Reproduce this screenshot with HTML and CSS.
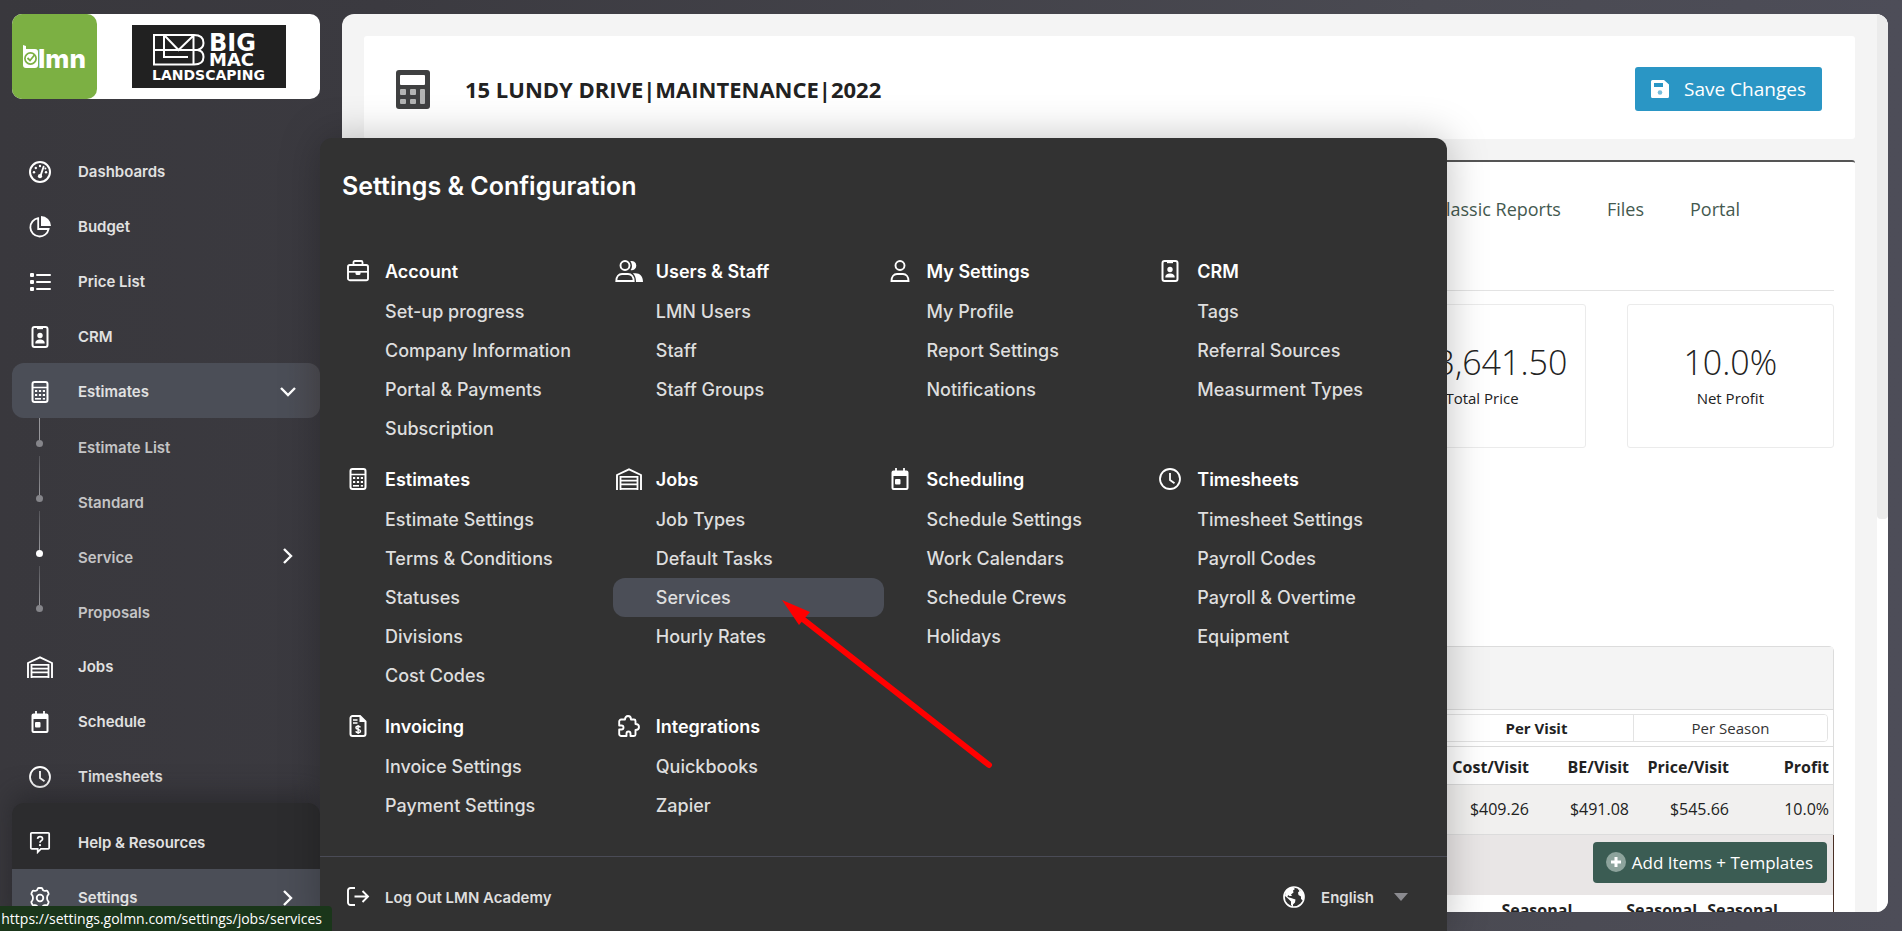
FILE: index.html
```
<!DOCTYPE html>
<html lang="en">
<head>
    <meta charset="UTF-8">
    <meta name="viewport" content="width=device-width, initial-scale=1.0">
    <title>LMN - Estimates</title>
    <link rel="stylesheet" href="styles.css">
</head>
<body>
    <!-- icon set -->
    <svg class="icon-defs" xmlns="http://www.w3.org/2000/svg">
        <symbol id="i-dash" viewBox="0 0 22 22">
            <circle cx="11" cy="11" r="10" fill="none" stroke="currentColor" stroke-width="2"/>
            <path d="M14.6 5.6l-3 9" stroke="currentColor" stroke-width="1.8" stroke-linecap="round"/>
            <circle cx="11" cy="15.2" r="2.1" fill="currentColor"/>
            <g fill="currentColor"><circle cx="5" cy="11.3" r="1.2"/><circle cx="6.8" cy="7" r="1.2"/><circle cx="11" cy="5" r="1.2"/><circle cx="17" cy="11.3" r="1.2"/><circle cx="16.4" cy="7.6" r="1"/></g>
        </symbol>
        <symbol id="i-pie" viewBox="0 0 22 22">
            <path d="M12 0a10 10 0 0 1 10 10H12z" fill="currentColor"/>
            <path d="M9.2 2.2A9.2 9.2 0 1 0 19.6 13H9.2z" fill="none" stroke="currentColor" stroke-width="1.8"/>
        </symbol>
        <symbol id="i-list" viewBox="0 0 22 22">
            <g fill="currentColor"><rect x="1" y="2" width="4" height="4" rx="1"/><rect x="1" y="9" width="4" height="4" rx="1"/><rect x="1" y="16" width="4" height="4" rx="1"/><rect x="7" y="3" width="15" height="2" rx="1"/><rect x="7" y="10" width="15" height="2" rx="1"/><rect x="7" y="17" width="15" height="2" rx="1"/></g>
        </symbol>
        <symbol id="i-crm" viewBox="0 0 22 22">
            <rect x="3.5" y="1" width="15" height="20" rx="2" fill="none" stroke="currentColor" stroke-width="2"/>
            <path d="M8 1h6v2.2H8z" fill="currentColor"/>
            <circle cx="11" cy="9.5" r="2.7" fill="currentColor"/>
            <path d="M6.3 17.5c0-3 2-4 4.7-4s4.7 1 4.7 4z" fill="currentColor"/>
        </symbol>
        <symbol id="i-calc" viewBox="0 0 22 22">
            <rect x="3.5" y="1" width="15" height="20" rx="2" fill="none" stroke="currentColor" stroke-width="2"/>
            <path d="M4 6.5h14" stroke="currentColor" stroke-width="1.5"/>
            <g fill="currentColor"><rect x="6" y="9" width="2.2" height="2"/><rect x="9.9" y="9" width="2.2" height="2"/><rect x="13.8" y="9" width="2.2" height="2"/><rect x="6" y="13" width="2.2" height="2"/><rect x="9.9" y="13" width="2.2" height="2"/><rect x="13.8" y="13" width="2.2" height="2"/><rect x="6" y="17" width="6" height="1.6"/><rect x="13.8" y="17" width="2.2" height="1.6"/></g>
        </symbol>
        <symbol id="i-jobs" viewBox="0 0 28 22">
            <path d="M2 22V7l12-5.6L26 7v15" fill="none" stroke="currentColor" stroke-width="1.9"/>
            <path d="M5.5 22V8.9h17V22M6 12.6h16M6 16.4h16M5 20.8h18" fill="none" stroke="currentColor" stroke-width="1.8"/>
        </symbol>
        <symbol id="i-cal" viewBox="0 0 22 22">
            <path d="M4.5 2.5h13a2 2 0 0 1 2 2V20a2 2 0 0 1-2 2h-13a2 2 0 0 1-2-2V4.5a2 2 0 0 1 2-2zM4.5 8v12h13V8z" fill="currentColor" fill-rule="evenodd"/>
            <path d="M7 0v4M15 0v4" stroke="currentColor" stroke-width="1.8"/>
            <rect x="6" y="11" width="5.5" height="5.5" rx="1" fill="currentColor"/>
        </symbol>
        <symbol id="i-clock" viewBox="0 0 22 22">
            <circle cx="11" cy="11" r="10" fill="none" stroke="currentColor" stroke-width="1.8"/>
            <path d="M11 5v7l4.5 3.2" fill="none" stroke="currentColor" stroke-width="1.8"/>
        </symbol>
        <symbol id="i-help" viewBox="0 0 22 24">
            <path d="M2 1h18a1 1 0 0 1 1 1v15.5a1 1 0 0 1-1 1h-8l-3.5 3.5v-3.5H2a1 1 0 0 1-1-1V2a1 1 0 0 1 1-1z" fill="none" stroke="currentColor" stroke-width="1.9"/>
            <path d="M8.3 7.5C8.5 5.7 9.6 5 11 5s2.8.9 2.8 2.5c0 2-2.8 2-2.8 4.3" fill="none" stroke="currentColor" stroke-width="1.8"/>
            <circle cx="11" cy="14.4" r="1.2" fill="currentColor"/>
        </symbol>
        <symbol id="i-gear" viewBox="0 0 22 22">
            <circle cx="11" cy="11" r="3.3" fill="none" stroke="currentColor" stroke-width="1.8"/>
            <path d="M9.6 1h2.8a1 1 0 0 1 1 .8c.3 1.6 1.6 2.5 3.3 2 .9-.3 1.4-.2 1.8.5l1 1.8c.4.7.2 1.2-.4 1.7-1.4 1.3-1.4 5.1 0 6.4.6.5.8 1 .4 1.7l-1 1.8c-.4.7-.9.8-1.8.5-1.7-.5-3 .4-3.3 2a1 1 0 0 1-1 .8H9.6a1 1 0 0 1-1-.8c-.3-1.6-1.6-2.5-3.3-2-.9.3-1.4.2-1.8-.5l-1-1.8c-.4-.7-.2-1.2.4-1.7 1.4-1.3 1.4-5.1 0-6.4-.6-.5-.8-1-.4-1.7l1-1.8c.4-.7.9-.8 1.8-.5 1.7.5 3-.4 3.300-2a1 1 0 0 1 1-.8z" fill="none" stroke="currentColor" stroke-width="1.8" stroke-linejoin="round"/>
        </symbol>
        <symbol id="i-case" viewBox="0 0 22 22">
            <path d="M6.5 5V2.3A1.3 1.3 0 0 1 7.8 1h6.4a1.3 1.3 0 0 1 1.3 1.3V5" fill="none" stroke="currentColor" stroke-width="1.8"/>
            <rect x="1" y="5" width="20" height="15.2" rx="1.8" fill="none" stroke="currentColor" stroke-width="1.9"/>
            <path d="M1 11.8h20" stroke="currentColor" stroke-width="1.7"/>
            <path d="M8.5 12h5v1.5a1.5 1.5 0 0 1-1.5 1.5h-2a1.5 1.5 0 0 1-1.5-1.5z" fill="currentColor"/>
        </symbol>
        <symbol id="i-users" viewBox="0 0 28 22">
            <circle cx="10" cy="5.5" r="4.5" fill="none" stroke="currentColor" stroke-width="1.9"/>
            <path d="M1.3 21c0-4.5 2.5-7 5.7-7h6c3.2 0 5.7 2.5 5.7 7z" fill="none" stroke="currentColor" stroke-width="1.9"/>
            <path d="M15.2 1.3a4.6 4.6 0 1 1 .3 8.8c2-2.6 2-6-.3-8.800zM17.8 13.2h2.7c4.5 0 7.5 3.3 7.5 8.8h-7c.1-3.9-1-7-3.2-8.8z" fill="currentColor"/>
        </symbol>
        <symbol id="i-user" viewBox="0 0 22 22">
            <circle cx="11" cy="5.5" r="4.5" fill="none" stroke="currentColor" stroke-width="1.9"/>
            <path d="M2.5 21c0-4.5 2.5-7 5.5-7h6c3 0 5.5 2.5 5.5 7z" fill="none" stroke="currentColor" stroke-width="1.9"/>
        </symbol>
        <symbol id="i-invoice" viewBox="0 0 22 22">
            <path d="M5.5 1H13l5.5 5.5V19a2 2 0 0 1-2 2h-11a2 2 0 0 1-2-2V3a2 2 0 0 1 2-2z" fill="none" stroke="currentColor" stroke-width="2"/>
            <path d="M12.5 1v6h6z" fill="currentColor"/>
            <path d="M6 5h4.5M6 8h4.5" stroke="currentColor" stroke-width="1.3"/>
            <path d="M13.4 12.3c-.5-.8-1.3-1-2.3-1-1.3 0-2.2.6-2.2 1.5 0 2.2 4.6 1 4.6 3.2 0 1-.9 1.6-2.3 1.6-1.2 0-2.1-.4-2.5-1.2M11.1 10v9" fill="none" stroke="currentColor" stroke-width="1.4"/>
        </symbol>
        <symbol id="i-puzzle" viewBox="0 0 22 22">
            <path d="M1.2 6.5a2 2 0 0 1 2-2H7c0-2 1-3.5 3-3.5s3 1.5 3 3.5h3a1.5 1.5 0 0 1 1.5 1.5v3c2 0 3.5 1 3.5 3s-1.500 3-3.500 3v4.500a1.500 1.500 0 0 1-1.500 1.500h-3.500v-2.500c0-1.200-.8-2-2-2s-2 .8-2 2V21H3.200a2 2 0 0 1-2-2v-4.500H3.500c1.200 0 2-.8 2-2s-.8-2-2-2H1.200z" fill="none" stroke="currentColor" stroke-width="1.9" stroke-linejoin="round"/>
        </symbol>
        <symbol id="i-logout" viewBox="0 0 22 22">
            <path d="M8 2H3.500A2.500 2.500 0 0 0 1 4.500v12A2.500 2.500 0 0 0 3.500 19H8M7.500 10.500H21M15.500 5l5.500 5.500-5.500 5.500" fill="none" stroke="currentColor" stroke-width="1.9"/>
        </symbol>
        <symbol id="i-globe" viewBox="0 0 22 22">
            <circle cx="11" cy="11" r="10" fill="none" stroke="currentColor" stroke-width="1.7"/>
            <path d="M3 4.500C5 2 8 1 10.500 1.500L12 3l-2 1.500.5 2L8 8.500l1 1.500H6.500L5 9l-.5 2L8 12l4.500 1.500-.5 3-2 2v2.500L8 19v-3.500L5.500 13 2 10zM14 2l5 3.500 2 4.500-1 4.500-2-1.500v-2.500L15.500 9 15 6.500l1.500-1.500z" fill="currentColor"/>
        </symbol>
        <symbol id="i-right" viewBox="0 0 12 18">
            <path d="M2 2l7 7-7 7" fill="none" stroke="currentColor" stroke-width="2.4"/>
        </symbol>
        <symbol id="i-down" viewBox="0 0 18 12">
            <path d="M2 2l7 7 7-7" fill="none" stroke="currentColor" stroke-width="2.4"/>
        </symbol>
    </svg>

    <aside class="sidebar">
        <div class="brand">
            <svg class="brand-lmn" viewBox="0 0 85 85">
                <rect width="85" height="85" rx="10" fill="#7cb043"/>
                <path d="M11 31l3 1v3h9a3 3 0 0 1 3 3v13a3 3 0 0 1-3 3h-9a3 3 0 0 1-3-3z" fill="#fff"/>
                <circle cx="18.5" cy="44.5" r="5.6" fill="none" stroke="#7cb043" stroke-width="1.7"/>
                <path d="M15.5 44l2.5 2.5 4.5-5.5" fill="none" stroke="#7cb043" stroke-width="1.8"/>
                <text class="lmn-text" x="26" y="54">lmn</text>
            </svg>
            <svg class="brand-company" viewBox="0 0 154 63">
                <rect width="154" height="63" fill="#212121"/>
                <g fill="none" stroke="#fff" stroke-width="2">
                    <path d="M22 10v29.5h40c6 0 9.5-2.5 9.5-7.5 0-4-2.5-6.5-6-7 3.5-1 6-3.5 6-7 0-5-3.5-8-9.5-8z"/>
                    <path d="M22 25h44M32 10v22h24M33 11l13.5 14L61 11M61.5 10v29.5"/>
                </g>
                <text class="company-big" x="77" y="26">BIG</text>
                <text class="company-mac" x="77" y="41">MAC</text>
                <text class="company-land" x="20" y="55">LANDSCAPING</text>
            </svg>
        </div>

        <nav class="nav">
            <a class="nav-item" href="#"><svg class="icon"><use href="#i-dash"/></svg>Dashboards</a>
            <a class="nav-item" href="#"><svg class="icon"><use href="#i-pie"/></svg>Budget</a>
            <a class="nav-item" href="#"><svg class="icon"><use href="#i-list"/></svg>Price List</a>
            <a class="nav-item" href="#"><svg class="icon"><use href="#i-crm"/></svg>CRM</a>
            <a class="nav-item active" href="#"><svg class="icon"><use href="#i-calc"/></svg>Estimates<svg class="chevron-down"><use href="#i-down"/></svg></a>
            <a class="nav-item sub first" href="#"><span class="dot"></span>Estimate List</a>
            <a class="nav-item sub" href="#"><span class="dot"></span>Standard</a>
            <a class="nav-item sub current" href="#"><span class="dot"></span>Service<svg class="chevron"><use href="#i-right"/></svg></a>
            <a class="nav-item sub" href="#"><span class="dot"></span>Proposals</a>
            <a class="nav-item" href="#"><svg class="icon"><use href="#i-jobs"/></svg>Jobs</a>
            <a class="nav-item" href="#"><svg class="icon"><use href="#i-cal"/></svg>Schedule</a>
            <a class="nav-item" href="#"><svg class="icon"><use href="#i-clock"/></svg>Timesheets</a>
        </nav>

        <div class="nav-bottom">
            <a class="nav-item" href="#"><svg class="icon"><use href="#i-help"/></svg>Help &amp; Resources</a>
            <a class="nav-item settings" href="#"><svg class="icon"><use href="#i-gear"/></svg>Settings<svg class="chevron"><use href="#i-right"/></svg></a>
        </div>
    </aside>

    <main class="content">
        <div class="page">
            <header class="page-header">
                <svg class="calc-icon" viewBox="0 0 34 39">
                    <rect width="34" height="39" rx="3" fill="#3f4041"/>
                    <rect x="4" y="5" width="25" height="10" rx="1" fill="#fff"/>
                    <g fill="#b3b4b4"><rect x="4" y="19" width="6" height="6" rx="1"/><rect x="14" y="19" width="6" height="6" rx="1"/><rect x="4" y="29" width="6" height="5" rx="1"/><rect x="14" y="29" width="6" height="5" rx="1"/><rect x="24" y="19" width="5" height="15" rx="1"/></g>
                </svg>
                <h1>15 LUNDY DRIVE|MAINTENANCE|2022</h1>
                <button type="button" class="btn-save">
                    <svg class="save-icon" viewBox="0 0 18 18">
                        <path d="M1.5 0H13l5 4.5V16.5a1.5 1.5 0 0 1-1.5 1.5h-15A1.5 1.5 0 0 1 0 16.5v-15A1.5 1.5 0 0 1 1.5 0zM3 3v4h9V3z" fill="#fff" fill-rule="evenodd"/>
                        <circle cx="9" cy="12.5" r="2.3" fill="#77bddc"/>
                    </svg>
                    Save Changes
                </button>
            </header>

            <section class="estimate">
                <nav class="tabs">
                    <a href="#">Classic Reports</a>
                    <a href="#">Files</a>
                    <a href="#">Portal</a>
                </nav>

                <div class="stats">
                    <div class="stat total"><span class="stat-value">$13,641.50</span><span class="stat-label">Total Price</span></div>
                    <div class="stat"><span class="stat-value">10.0%</span><span class="stat-label">Net Profit</span></div>
                </div>

                <div class="services">
                    <div class="services-head"></div>
                    <div class="toggle-row">
                        <div class="toggle">
                            <button type="button" class="selected">Per Visit</button>
                            <button type="button">Per Season</button>
                        </div>
                    </div>
                    <table class="visits">
                        <thead>
                            <tr><th>Cost/Visit</th><th>BE/Visit</th><th>Price/Visit</th><th>Profit</th></tr>
                        </thead>
                        <tbody>
                            <tr><td>$409.26</td><td>$491.08</td><td>$545.66</td><td>10.0%</td></tr>
                        </tbody>
                    </table>
                    <div class="items">
                        <div class="items-bar">
                            <button type="button" class="btn-add">
                                <svg class="plus-icon" viewBox="0 0 20 20">
                                    <circle cx="10" cy="10" r="10" fill="#8da39c"/>
                                    <path d="M10 5v10M5 10h10" stroke="#fff" stroke-width="3"/>
                                </svg>
                                Add Items + Templates
                            </button>
                        </div>
                        <div class="seasonal">
                            <span>Seasonal</span>
                            <span>Seasonal</span>
                            <span>Seasonal</span>
                        </div>
                    </div>
                </div>
            </section>
        </div>
        <div class="scrollbar"><div class="thumb"></div></div>
    </main>

    <!-- settings flyout -->
    <div class="flyout">
        <h2>Settings &amp; Configuration</h2>
        <div class="menu-grid">
            <section class="group">
                <h3><svg class="icon"><use href="#i-case"/></svg>Account</h3>
                <a href="#">Set-up progress</a>
                <a href="#">Company Information</a>
                <a href="#">Portal &amp; Payments</a>
                <a href="#">Subscription</a>
            </section>
            <section class="group">
                <h3><svg class="icon"><use href="#i-users"/></svg>Users &amp; Staff</h3>
                <a href="#">LMN Users</a>
                <a href="#">Staff</a>
                <a href="#">Staff Groups</a>
            </section>
            <section class="group">
                <h3><svg class="icon"><use href="#i-user"/></svg>My Settings</h3>
                <a href="#">My Profile</a>
                <a href="#">Report Settings</a>
                <a href="#">Notifications</a>
            </section>
            <section class="group">
                <h3><svg class="icon"><use href="#i-crm"/></svg>CRM</h3>
                <a href="#">Tags</a>
                <a href="#">Referral Sources</a>
                <a href="#">Measurment Types</a>
            </section>
            <section class="group">
                <h3><svg class="icon"><use href="#i-calc"/></svg>Estimates</h3>
                <a href="#">Estimate Settings</a>
                <a href="#">Terms &amp; Conditions</a>
                <a href="#">Statuses</a>
                <a href="#">Divisions</a>
                <a href="#">Cost Codes</a>
            </section>
            <section class="group">
                <h3><svg class="icon"><use href="#i-jobs"/></svg>Jobs</h3>
                <a href="#">Job Types</a>
                <a href="#">Default Tasks</a>
                <a href="#" class="hovered">Services</a>
                <a href="#">Hourly Rates</a>
            </section>
            <section class="group">
                <h3><svg class="icon"><use href="#i-cal"/></svg>Scheduling</h3>
                <a href="#">Schedule Settings</a>
                <a href="#">Work Calendars</a>
                <a href="#">Schedule Crews</a>
                <a href="#">Holidays</a>
            </section>
            <section class="group">
                <h3><svg class="icon"><use href="#i-clock"/></svg>Timesheets</h3>
                <a href="#">Timesheet Settings</a>
                <a href="#">Payroll Codes</a>
                <a href="#">Payroll &amp; Overtime</a>
                <a href="#">Equipment</a>
            </section>
            <section class="group">
                <h3><svg class="icon"><use href="#i-invoice"/></svg>Invoicing</h3>
                <a href="#">Invoice Settings</a>
                <a href="#">Payment Settings</a>
            </section>
            <section class="group">
                <h3><svg class="icon"><use href="#i-puzzle"/></svg>Integrations</h3>
                <a href="#">Quickbooks</a>
                <a href="#">Zapier</a>
            </section>
        </div>
        <footer class="flyout-footer">
            <a href="#"><svg class="icon"><use href="#i-logout"/></svg>Log Out LMN Academy</a>
            <button type="button" class="language"><svg class="icon"><use href="#i-globe"/></svg>English<span class="caret"></span></button>
        </footer>
    </div>

    <svg class="arrow" viewBox="0 0 214 172">
        <path d="M207 165L22 20" stroke="#f00" stroke-width="6" stroke-linecap="round"/>
        <path d="M0 0l28 12-11 13z" fill="#f00"/>
    </svg>

    <div class="status-bar"><span>https://settings.golmn.com/settings/jobs/services</span></div>
</body>
</html>
```

FILE: styles.css
```
* {
    box-sizing: border-box;
}
body {
    margin: 0;
    height: 100vh;
    display: flex;
    gap: 22px;
    padding: 14px 14px 0 12px;
    overflow: hidden;
    position: relative;
    background: linear-gradient(to right, #39383d 0%, #3b3a40 20%, #4a4a52 75%, #4d4d58 100%);
    font-family: "Open Sans", "Noto Sans", sans-serif;
    color: #222;
}
a {
    color: inherit;
    text-decoration: none;
}
button {
    font-family: inherit;
    cursor: pointer;
}
.icon-defs {
    position: absolute;
    width: 0;
    height: 0;
}
.icon {
    width: 28px;
    height: 22px;
    flex-shrink: 0;
    color: #fff;
}

/* sidebar */
.sidebar {
    width: 308px;
    flex-shrink: 0;
    display: flex;
    flex-direction: column;
    font-family: Inter, sans-serif;
}
.brand {
    height: 85px;
    flex-shrink: 0;
    display: flex;
    align-items: center;
    gap: 35px;
    background: #fff;
    border-radius: 10px;
    margin-bottom: 44px;
}
.brand-lmn {
    width: 85px;
    height: 85px;
}
.brand-company {
    width: 154px;
    height: 63px;
}
.lmn-text {
    font: 800 26px Inter, sans-serif;
    fill: #fff;
}
.company-big, .company-mac, .company-land {
    font: bold 24px "DejaVu Sans", sans-serif;
    fill: #fff;
}
.company-mac {
    font-size: 18px;
}
.company-land {
    font-size: 14px;
}
.nav-item {
    height: 55px;
    flex-shrink: 0;
    display: flex;
    align-items: center;
    gap: 24px;
    padding: 2px 22px 0 14px;
    border-radius: 12px;
    font-size: 15px;
    font-weight: 600;
    color: #e1e1e1;
    position: relative;
}
.nav-item.active {
    background: linear-gradient(to right, #4b4e57 90%, #4d4c52);
}
.chevron, .chevron-down {
    width: 12px;
    height: 18px;
    margin-left: auto;
    margin-right: 4px;
    color: #fff;
}
.chevron-down {
    width: 18px;
    height: 12px;
    margin-right: 1px;
}
.nav-item.sub {
    padding-top: 4px;
    color: #c4c4c5;
}
.nav-item.sub .chevron {
    margin-bottom: 4px;
}
.dot {
    width: 7px;
    height: 7px;
    margin: 0 11px 8px 10px;
    border-radius: 50%;
    background: #85858a;
}
.nav-item.sub::before {
    content: "";
    position: absolute;
    left: 27px;
    top: -17px;
    width: 1px;
    height: 39px;
    background: linear-gradient(#55555a, #97979b);
}
.nav-item.sub.first::before {
    top: 0;
    height: 22px;
    background: #97979b;
}
.nav-item.current .dot {
    background: #fff;
}
.nav-bottom {
    flex: 1 0 auto;
    padding-top: 11px;
    background: #2c2c2e;
    border-radius: 12px 12px 0 0;
    position: relative;
    box-shadow: 0 -8px 26px rgba(34, 34, 36, 0.6);
}
.nav-item.settings {
    background: #4b4e57;
    border-radius: 0;
}

/* page */
.content {
    flex: 1;
    display: flex;
    margin-bottom: 19px;
    background: #f4f4f4;
    border-radius: 12px;
    overflow: hidden;
}
.page {
    flex: 1;
    padding: 22px 22px 0;
}
.scrollbar {
    width: 11px;
    background: #fff;
}
.thumb {
    height: 505px;
    background: #ebebeb;
    border-radius: 0 0 4px 4px;
}
.page-header {
    height: 103px;
    display: flex;
    align-items: center;
    padding: 3px 33px 0 32px;
    margin-bottom: 21px;
    background: #fff;
    border-radius: 3px;
}
.calc-icon {
    width: 34px;
    height: 39px;
}
h1 {
    flex: 1;
    margin: 0 0 0 35px;
    font-size: 22px;
    font-weight: 700;
}
.btn-save {
    height: 44px;
    display: flex;
    align-items: center;
    gap: 15px;
    padding: 0 16px;
    border: none;
    border-radius: 3px;
    background: #2a96c5;
    color: #fff;
    font-size: 19px;
}
.save-icon {
    width: 18px;
    height: 18px;
}
.estimate {
    height: 800px;
    padding: 0 21px;
    background: #fff;
    border-top: 2px solid #555;
    border-radius: 3px;
}
.tabs {
    height: 129px;
    display: flex;
    justify-content: flex-end;
    gap: 46px;
    padding: 35px 94px 0 0;
    border-bottom: 1px solid #e3e3e3;
    font-size: 18px;
    color: #44594f;
}
.stats {
    display: grid;
    grid-template-columns: repeat(6, 1fr);
    gap: 41px;
    margin: 13px 0 198px;
}
.stat {
    height: 144px;
    display: flex;
    flex-direction: column;
    align-items: center;
    padding-top: 32px;
    border: 1px solid #ebebeb;
    border-radius: 3px;
}
.stat.total {
    grid-column: 5;
}
.stat-value {
    font-size: 34px;
    font-weight: 300;
    line-height: 50px;
}
.stat-label {
    font-size: 15px;
    line-height: 22px;
}
.services {
    border: 1px solid #dcdcdc;
    border-radius: 5px;
}
.services-head {
    height: 63px;
    background: #f4f4f4;
    border-bottom: 1px solid #dcdcdc;
}
.toggle-row {
    height: 37px;
    display: flex;
    justify-content: flex-end;
    padding: 4px 5px;
    border-bottom: 1px solid #dcdcdc;
}
.toggle {
    display: flex;
    border: 1px solid #e3e3e3;
    border-radius: 4px;
    overflow: hidden;
}
.toggle button {
    width: 194px;
    border: none;
    border-left: 1px solid #e3e3e3;
    background: #fff;
    color: #333;
    font-size: 15px;
}
.toggle .selected {
    color: #222;
    font-weight: 700;
}
.visits {
    width: 100%;
    table-layout: fixed;
    border-collapse: collapse;
    text-align: right;
    font-size: 16px;
}
.visits th, .visits td {
    width: 100px;
    padding: 0 4px 0 0;
    border-bottom: 1px solid #dcdcdc;
}
.visits th {
    height: 37px;
    padding-top: 3px;
    font-weight: 700;
}
.visits td {
    height: 50px;
    background: #f1f0ef;
}
.visits th:first-child {
    width: auto;
}
.items {
    border-right: 1px solid #4a2f25;
    margin-right: -1px;
}
.items-bar {
    height: 60px;
    display: flex;
    justify-content: flex-end;
    align-items: flex-start;
    padding: 7px 6px;
    background: #e9e6e6;
}
.btn-add {
    height: 41px;
    display: flex;
    align-items: center;
    gap: 6px;
    padding: 0 14px 0 13px;
    border: none;
    border-radius: 4px;
    background: #3b5c53;
    color: #fff;
    font-size: 17px;
}
.plus-icon {
    width: 20px;
    height: 20px;
}
.seasonal {
    display: flex;
    justify-content: flex-end;
    gap: 10px;
    padding: 4px 55px 0 0;
    font-size: 16px;
    font-weight: 700;
}
.seasonal span:first-child {
    margin-right: 44px;
}

/* settings flyout, over the page */
.flyout {
    position: absolute;
    left: 320px;
    top: 138px;
    bottom: 0;
    width: 1127px;
    display: flex;
    flex-direction: column;
    background: #323232;
    border-radius: 12px 12px 0 0;
    box-shadow: 0 0 40px rgba(0, 0, 0, 0.25);
    font-family: Inter, sans-serif;
    color: #dedede;
}
h2 {
    margin: 28px 22px 44px;
    font-size: 25px;
    line-height: 40px;
    font-weight: 600;
    color: #fff;
}
.menu-grid {
    flex: 1;
    display: grid;
    grid-template-columns: repeat(4, 1fr);
    align-content: start;
    row-gap: 10px;
    padding: 0 22px;
}
.group h3 {
    height: 42px;
    display: flex;
    align-items: center;
    gap: 13px;
    margin: 0;
    padding-left: 2px;
    font-size: 18px;
    font-weight: 600;
    color: #fff;
}
.group a {
    display: block;
    padding-left: 43px;
    border-radius: 12px;
    font-size: 18px;
    line-height: 39px;
    font-weight: 500;
}
.group .hovered {
    background: #4b4e57;
}
.flyout-footer {
    height: 75px;
    display: flex;
    justify-content: space-between;
    padding: 0 39px 0 24px;
    border-top: 1px solid #4a4b56;
    font-size: 15px;
    font-weight: 600;
}
.flyout-footer a, .language {
    height: 80px;
    display: flex;
    align-items: center;
    gap: 13px;
}
.language {
    padding: 0;
    border: none;
    background: none;
    font-size: 15px;
    font-weight: 600;
    color: #dedede;
}
.caret {
    margin-left: 7px;
    border: 7px solid transparent;
    border-top: 8px solid #8b8b90;
    border-bottom: none;
}
.arrow {
    position: absolute;
    left: 782px;
    top: 600px;
    width: 214px;
    height: 172px;
}

/* link target shown by the browser */
.status-bar {
    position: absolute;
    left: 0;
    bottom: 0;
    width: 332px;
    height: 25px;
    display: flex;
    justify-content: flex-end;
    padding-right: 10px;
    overflow: hidden;
    background: #1a361a;
    border-top-right-radius: 4px;
    color: #fff;
    font-size: 14px;
    line-height: 26px;
}
```
